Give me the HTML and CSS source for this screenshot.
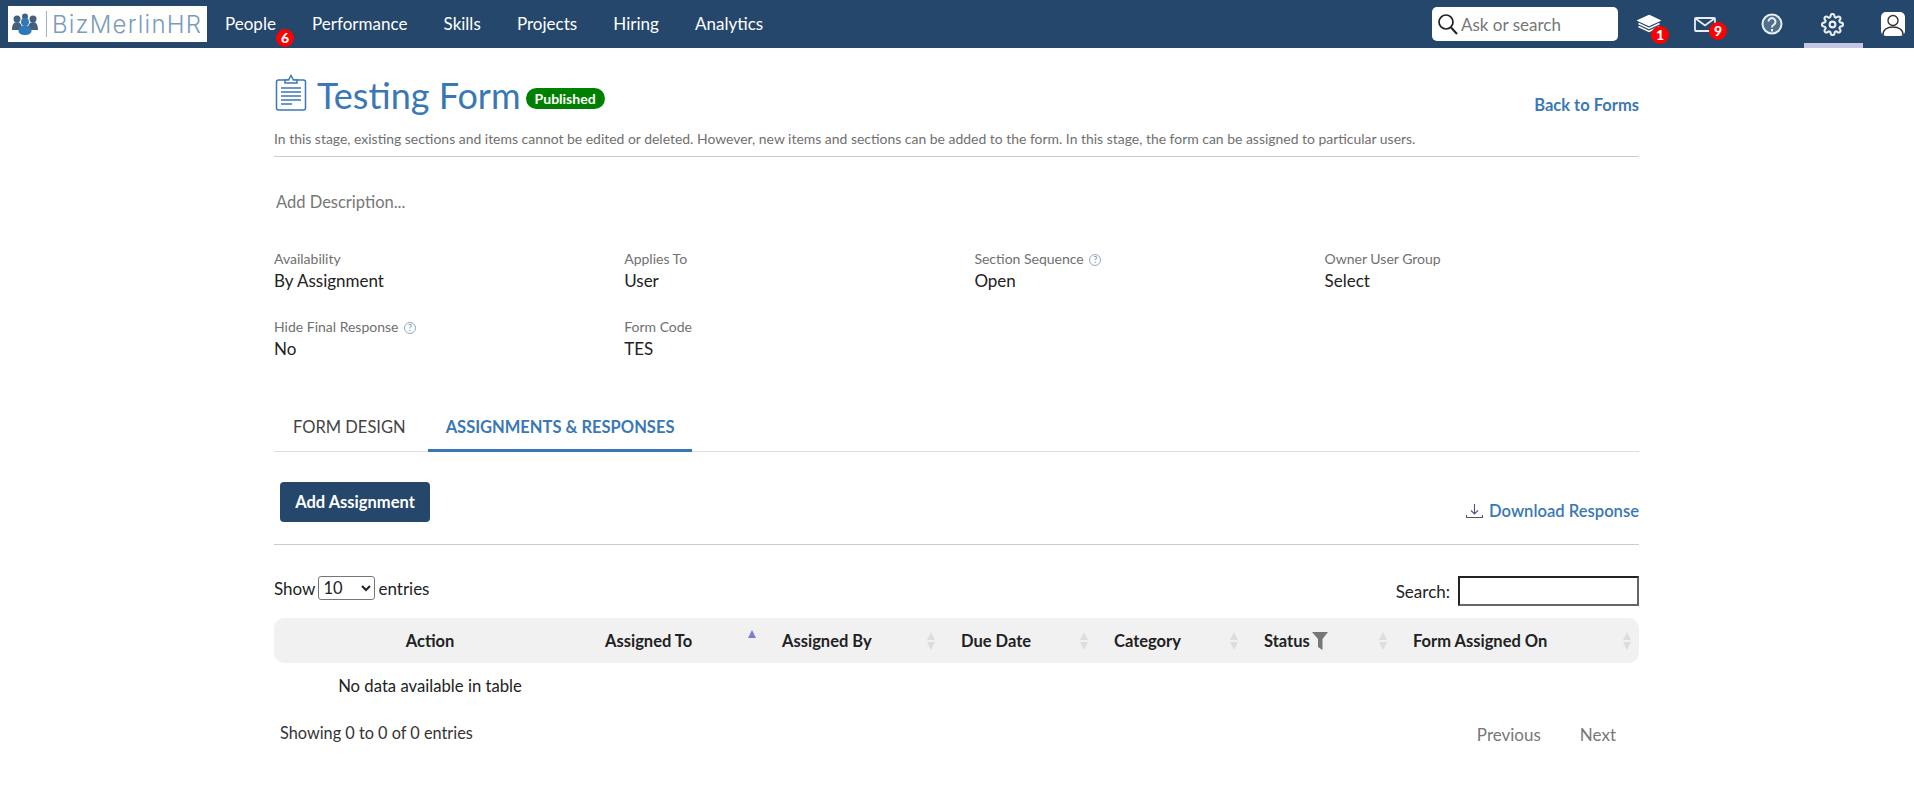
FILE: index.html
```html
<!DOCTYPE html>
<html lang="en">
<head>
  <meta charset="UTF-8">
  <meta name="viewport" content="width=device-width, initial-scale=1.0">
  <title>Testing Form</title>
  <link rel="stylesheet" href="styles.css">
</head>
<body>
  <header class="topbar">
    <div class="logo">
      <svg class="logo-mark" width="26" height="22" viewBox="0 0 26 22">
        <circle cx="5" cy="6" r="3.500" fill="#44607f"/>
        <circle cx="21" cy="6" r="3.500" fill="#44607f"/>
        <circle cx="13" cy="3.500" r="3" fill="#44607f"/>
        <path d="M0 17c0-5 1.500-8 5-8s5 3 5 8zM16 17c0-5 1.500-8 5-8s5 3 5 8z" fill="#44607f"/>
        <circle cx="13" cy="9" r="4" fill="#3178b8"/>
        <path d="M6.500 18c0-3 2-5.500 6.500-5.500s6.500 2.500 6.500 5.500c0 2.500-3 4-6.500 4s-6.500-1.500-6.500-4z" fill="#3178b8"/>
      </svg>
      <span class="logo-sep"></span>
      <span class="logo-text">BizMerlinHR</span>
    </div>
    <nav class="mainnav">
      <a>People<span class="count count-people">6</span></a>
      <a>Performance</a>
      <a>Skills</a>
      <a>Projects</a>
      <a>Hiring</a>
      <a>Analytics</a>
    </nav>
    <div class="topsearch">
      <svg width="22" height="24" viewBox="0 0 22 24" fill="none" stroke="#222" stroke-width="1.700">
        <circle cx="9" cy="10" r="7"/>
        <path d="M14 15.500l6 6.500" stroke-width="2"/>
      </svg>
      <span>Ask or search</span>
    </div>
    <div class="topicons">
      <div class="topicon icon-stack">
        <svg width="24" height="20" viewBox="0 0 24 20" fill="none" stroke="#fff" stroke-width="1.500">
          <path d="M12 1.500L23 6.500 12 11.500 1 6.500z" fill="#fff"/>
          <path d="M1.500 9.500L12 14.500 22.500 9.500"/>
          <path d="M1.500 12.500L12 17.500 22.500 12.500"/>
        </svg>
        <span class="count count-stack">1</span>
      </div>
      <div class="topicon icon-mail">
        <svg width="22" height="15" viewBox="0 0 22 15" fill="none" stroke="#e8eef4" stroke-width="1.800">
          <rect x="1" y="1" width="20" height="13" rx="1"/>
          <path d="M1.500 1.500L11 8.500 20.500 1.500"/>
        </svg>
        <span class="count count-mail">9</span>
      </div>
      <div class="topicon icon-help">
        <svg width="22" height="22" viewBox="0 0 22 22" fill="none" stroke="#e8eef4" stroke-width="2">
          <circle cx="11" cy="11" r="9.500" fill="#52708c"/>
          <path d="M7.500 8.500a3.500 3.500 0 1 1 5.500 3c-1.300 .9-2 1.500-2 3"/>
          <path d="M11 16v2.500"/>
        </svg>
      </div>
      <div class="topicon icon-gear">
        <svg width="23" height="23" viewBox="0 0 24 24" fill="none" stroke="#e8eef4" stroke-width="2.200" stroke-linejoin="round">
          <circle cx="12" cy="12" r="3"/>
          <path d="M19.400 15a1.650 1.650 0 0 0 .33 1.820l.06.06a2 2 0 0 1 0 2.830 2 2 0 0 1-2.830 0l-.06-.06a1.650 1.650 0 0 0-1.820-.33 1.650 1.650 0 0 0-1 1.510V21a2 2 0 0 1-2 2 2 2 0 0 1-2-2v-.09A1.650 1.650 0 0 0 9 19.400a1.650 1.650 0 0 0-1.820.33l-.06.06a2 2 0 0 1-2.830 0 2 2 0 0 1 0-2.830l.06-.06a1.650 1.650 0 0 0 .33-1.820 1.650 1.650 0 0 0-1.510-1H3a2 2 0 0 1-2-2 2 2 0 0 1 2-2h.09A1.650 1.650 0 0 0 4.600 9a1.650 1.650 0 0 0-.33-1.820l-.06-.06a2 2 0 0 1 0-2.830 2 2 0 0 1 2.830 0l.06.06a1.650 1.650 0 0 0 1.820.33H9a1.650 1.650 0 0 0 1-1.510V3a2 2 0 0 1 2-2 2 2 0 0 1 2 2v.09a1.650 1.650 0 0 0 1 1.510 1.650 1.650 0 0 0 1.820-.33l.06-.06a2 2 0 0 1 2.830 0 2 2 0 0 1 0 2.830l-.06.06a1.650 1.650 0 0 0-.33 1.820V9a1.650 1.650 0 0 0 1.510 1H21a2 2 0 0 1 2 2 2 2 0 0 1-2 2h-.09a1.650 1.650 0 0 0-1.510 1z"/>
        </svg>
      </div>
      <div class="topicon icon-user">
        <svg width="24" height="24" viewBox="0 0 24 24">
          <rect width="24" height="24" rx="5" fill="#fff"/>
          <circle cx="12" cy="8.500" r="5" fill="none" stroke="#333" stroke-width="1.400"/>
          <path d="M2 23c0-5 4-8 10-8s10 3 10 8" fill="none" stroke="#333" stroke-width="1.600"/>
        </svg>
      </div>
    </div>
  </header>

  <main class="page">
    <section class="form-head">
      <div class="title-row">
        <svg class="title-icon" width="32" height="37" viewBox="0 0 32 37" fill="none" stroke="#3a78b5" stroke-width="1.500">
          <rect x="1.500" y="6" width="29" height="30" rx="2"/>
          <path d="M10 9V6h3.500l2.500-4.500L18.500 6H22v3z" fill="#fff"/>
          <path d="M6 14h20M6 18h20M6 22h20M6 26h20M6 30h11"/>
        </svg>
        <h1>Testing Form</h1>
        <span class="badge">Published</span>
        <a class="back-link">Back to Forms</a>
      </div>
      <p class="stage-note">In this stage, existing sections and items cannot be edited or deleted. However, new items and sections can be added to the form. In this stage, the form can be assigned to particular users.</p>
    </section>

    <p class="add-desc">Add Description...</p>

    <section class="props">
      <div class="prop">
        <div class="prop-label">Availability</div>
        <div class="prop-value">By Assignment</div>
      </div>
      <div class="prop">
        <div class="prop-label">Applies To</div>
        <div class="prop-value">User</div>
      </div>
      <div class="prop">
        <div class="prop-label">Section Sequence <span class="hint">?</span></div>
        <div class="prop-value">Open</div>
      </div>
      <div class="prop">
        <div class="prop-label">Owner User Group</div>
        <div class="prop-value">Select</div>
      </div>
      <div class="prop">
        <div class="prop-label">Hide Final Response <span class="hint">?</span></div>
        <div class="prop-value">No</div>
      </div>
      <div class="prop">
        <div class="prop-label">Form Code</div>
        <div class="prop-value">TES</div>
      </div>
    </section>

    <div class="tabs">
      <a class="tab">FORM DESIGN</a>
      <a class="tab tab-active">ASSIGNMENTS &amp; RESPONSES</a>
    </div>

    <div class="actions">
      <button class="btn-add">Add Assignment</button>
      <a class="download">
        <svg width="17" height="16" viewBox="0 0 17 16" fill="none" stroke="#555" stroke-width="1.100">
          <path d="M8.500 1v10M5 7.500l3.500 3.500L12 7.500" stroke="#5a4f8a"/>
          <path d="M.5 12v2.500h16V12"/>
        </svg>
        Download Response
      </a>
    </div>

    <div class="table-top">
      <label class="show">Show
        <select class="show-select"><option>10</option></select>
        entries</label>
      <label class="search">Search: <input class="search-input" type="text"></label>
    </div>

    <table class="grid">
      <colgroup>
        <col class="c-action"><col class="c-to"><col class="c-by"><col class="c-due"><col class="c-cat"><col class="c-status"><col class="c-on">
      </colgroup>
      <thead>
        <tr>
          <th class="th-action">Action</th>
          <th>Assigned To<span class="sort sort-asc"></span></th>
          <th>Assigned By<span class="sort"></span></th>
          <th>Due Date<span class="sort"></span></th>
          <th>Category<span class="sort"></span></th>
          <th>Status
            <svg class="funnel" width="16" height="18" viewBox="0 0 16 18"><path d="M0 0h16l-5.500 7v11L6 15V7z" fill="#777"/></svg>
            <span class="sort"></span></th>
          <th class="th-last">Form Assigned On<span class="sort"></span></th>
        </tr>
      </thead>
      <tbody>
        <tr><td class="empty">No data available in table</td><td colspan="6"></td></tr>
      </tbody>
    </table>

    <div class="table-foot">
      <div class="info">Showing 0 to 0 of 0 entries</div>
      <div class="pager"><a>Previous</a><a>Next</a></div>
    </div>
  </main>
</body>
</html>
```

FILE: styles.css
```css
* {
  box-sizing: border-box;
}

body {
  margin: 0;
  font-family: Lato, "Liberation Sans", sans-serif;
  font-size: 16.5px;
  color: #222;
  background: #fff;
}

/**
 * Top bar
 */
.topbar {
  height: 48px;
  background: #24476b;
  display: flex;
  align-items: center;
  padding-left: 8px;
  color: #fff;
}

.logo {
  width: 199px;
  height: 36px;
  background: #fff;
  display: flex;
  align-items: center;
  padding-left: 4px;
}

.logo-sep {
  width: 1px;
  height: 26px;
  background: #9db4ca;
  margin: 0 5px 0 8px;
}

.logo-text {
  font-family: Inter, sans-serif;
  font-size: 24px;
  font-weight: 300;
  letter-spacing: 1.2px;
  color: #7b9cbb;
}

.mainnav {
  display: flex;
  margin-left: 18px;
  margin-bottom: 2px;
  gap: 36.2px;
  font-size: 17px;
}

.mainnav a {
  color: #fff;
  position: relative;
}

.count {
  position: absolute;
  width: 18px;
  height: 18px;
  border-radius: 50%;
  background: #f00;
  color: #fff;
  font-size: 14px;
  font-weight: 900;
  line-height: 18px;
  text-align: center;
}

.count-people {
  left: 51px;
  top: 16px;
}

.topsearch {
  margin-left: auto;
  width: 186px;
  height: 34px;
  background: #fff;
  border-radius: 5px;
  display: flex;
  align-items: center;
  gap: 2px;
  padding-left: 5px;
  font-size: 17px;
  color: #777;
}

.topicons {
  display: flex;
  height: 48px;
  margin-left: 18px;
  margin-right: 9px;
}

.topicon {
  position: relative;
  display: flex;
  align-items: center;
  justify-content: center;
}

.icon-stack {
  width: 28px;
  margin-right: -1px;
  left: -1px;
}

.count-stack {
  left: 16px;
  top: 26px;
}

.icon-mail {
  width: 22px;
  margin-left: 31px;
}

.count-mail {
  left: 15px;
  top: 22px;
}

.icon-help {
  width: 22px;
  margin-left: 45px;
}

.icon-gear {
  width: 59px;
  margin-left: 21px;
  border-bottom: 5px solid #c5c6e4;
  padding-top: 5px;
  padding-right: 2px;
}

.icon-user {
  width: 24px;
  margin-left: 18px;
}

/**
 * Page
 */
.page {
  width: 1365px;
  margin-left: 274px;
}

.title-row {
  display: flex;
  align-items: center;
  height: 63px;
  margin-top: 15px;
}

.title-icon {
  margin-left: 1px;
  margin-top: -4px;
}

h1 {
  margin: 0 0 0 10px;
  font-size: 36px;
  font-weight: 400;
  color: #3a78b5;
}

.badge {
  margin: 8px 0 0 5px;
  background: #008000;
  color: #fff;
  font-size: 14px;
  font-weight: 700;
  line-height: 21px;
  padding: 0 9px;
  border-radius: 11px;
}

.back-link {
  margin-left: auto;
  margin-top: 20px;
  color: #3a78b5;
  font-weight: 700;
}

.stage-note {
  margin: 0;
  padding: 4px 0 8px;
  font-size: 13.95px;
  line-height: 18px;
  color: #707070;
  border-bottom: 1px solid #ccc;
}

.add-desc {
  margin: 0;
  padding: 35px 0 0 2px;
  line-height: 20px;
  color: #777;
}

.props {
  display: grid;
  grid-template-columns: repeat(4, 350.2px);
  row-gap: 28px;
  margin-top: 39px;
}

.prop-label {
  font-size: 14px;
  line-height: 16px;
  color: #707070;
}

.prop-value {
  font-size: 17px;
  line-height: 20px;
  margin-top: 4px;
  color: #222;
}

.hint {
  display: inline-block;
  width: 12px;
  height: 12px;
  border: 1px solid #8fa9c4;
  border-radius: 50%;
  font-size: 9px;
  line-height: 10px;
  text-align: center;
  color: #6d8fb0;
  margin-left: 2px;
  vertical-align: 1px;
}

/**
 * Tabs
 */
.tabs {
  display: flex;
  margin-top: 44px;
  height: 49px;
  border-bottom: 1px solid #ddd;
}

.tab {
  padding: 0 18px;
  line-height: 48px;
  color: #444;
  height: 49px;
}

.tab:first-child {
  margin-left: 1px;
  padding-right: 22px;
}

.tab-active {
  color: #3a78b5;
  font-weight: 700;
  border-bottom: 3px solid #3a78b5;
}

.actions {
  display: flex;
  justify-content: space-between;
  align-items: flex-end;
  padding: 30px 0 22px 6px;
  border-bottom: 1px solid #ccc;
}

.btn-add {
  width: 150px;
  height: 40px;
  background: #24476b;
  color: #fff;
  border: 0;
  border-radius: 4px;
  font-family: inherit;
  font-size: 16.5px;
  font-weight: 700;
}

.download {
  display: flex;
  align-items: center;
  gap: 6px;
  margin-bottom: 1px;
  color: #3a78b5;
  font-weight: 600;
  font-size: 16.6px;
  line-height: 20px;
}

/**
 * Table
 */
.table-top {
  display: flex;
  justify-content: space-between;
  align-items: flex-start;
  margin-top: 31px;
  height: 30px;
}

.show {
  display: flex;
  align-items: center;
  gap: 3px;
  height: 24px;
  font-size: 17px;
}

.show-select {
  width: 57px;
  height: 24px;
  font-family: inherit;
  font-size: 16.5px;
  color: #222;
  background: #fff;
  border: 1px solid #767676;
  border-radius: 3px;
}

.search {
  display: flex;
  align-items: center;
  gap: 8px;
  font-size: 17px;
}

.search-input {
  width: 181px;
  height: 30px;
  border: 2px solid;
  border-color: #222 #666 #666 #222;
}

.grid {
  width: 100%;
  margin-top: 12px;
  border-collapse: separate;
  border-spacing: 0;
  table-layout: fixed;
}

.c-action { width: 316px; }
.c-to { width: 177px; }
.c-by { width: 179px; }
.c-due { width: 153px; }
.c-cat { width: 150px; }
.c-status { width: 149px; }
.c-on { width: 241px; }

.grid th {
  position: relative;
  height: 45px;
  padding: 0 15px;
  background: #f1f1f1;
  font-weight: 700;
  text-align: left;
  white-space: nowrap;
}

.grid th:first-child {
  border-radius: 10px 0 0 10px;
}

.grid th:last-child {
  border-radius: 0 10px 10px 0;
}

.grid .th-action {
  text-align: center;
  padding: 0 4px 0 0;
}

.grid td {
  height: 46px;
  padding: 0;
}

.grid .empty {
  text-align: center;
  padding-right: 4px;
  font-size: 16.7px;
}

.funnel {
  vertical-align: -3px;
  margin-left: -2px;
}

.sort {
  position: absolute;
  right: 10px;
  top: 14px;
  width: 10px;
  height: 18px;
}

.th-last .sort {
  right: 7px;
}

.sort::before,
.sort::after {
  content: "";
  position: absolute;
  left: 1px;
  border-left: 4px solid transparent;
  border-right: 4px solid transparent;
}

.sort::before {
  top: 0;
  border-bottom: 8px solid #ddd;
}

.sort::after {
  bottom: 0;
  border-top: 8px solid #ddd;
}

.grid .sort-asc {
  top: 12px;
  right: 10px;
}

.sort-asc::before {
  border-bottom-color: #7b7fd0;
}

.sort-asc::after {
  display: none;
}

.table-foot {
  display: flex;
  justify-content: space-between;
  align-items: center;
  margin-top: 1px;
  padding-left: 6px;
}

.info {
  line-height: 46px;
  color: #333;
  font-size: 16.3px;
}

.pager {
  display: flex;
  gap: 39px;
  padding-top: 2px;
  padding-right: 23px;
  font-size: 17px;
  color: #777;
}
```
